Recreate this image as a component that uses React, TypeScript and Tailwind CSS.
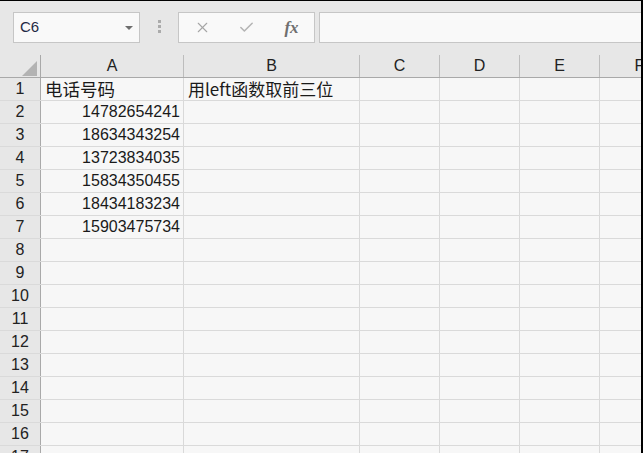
import { Check, X } from "lucide-react";

const cols = [
  { label: "A", w: "w-[143px]" },
  { label: "B", w: "w-[176px]" },
  { label: "C", w: "w-[80px]" },
  { label: "D", w: "w-[80px]" },
  { label: "E", w: "w-[80px]" },
  { label: "F", w: "w-[80px]" },
];

const phones = [
  "14782654241",
  "18634343254",
  "13723834035",
  "15834350455",
  "18434183234",
  "15903475734",
];

const rows = Array.from({ length: 17 }, (_, i) => i + 1);

function Toolbar() {
  return (
    <div className="flex shrink-0 items-start h-[54px] pt-[11px] pl-[13px] bg-[#e7e7e7]">
      <div className="flex shrink-0 items-center justify-between w-[127px] h-[31px] border border-[#c6c6c6] bg-[#f9f9f9] pl-[6px] pr-[6px]">
        <span className="text-[15px] text-[#1f2a44]">C6</span>
        <div className="w-0 h-0 border-l-[4px] border-r-[4px] border-t-[4px] border-l-transparent border-r-transparent border-t-[#6e6e6e]" />
      </div>
      <div className="flex shrink-0 flex-col gap-[2px] w-[38px] items-center pt-[8px]">
        <div className="w-[3px] h-[3px] bg-[#ababab]" />
        <div className="w-[3px] h-[3px] bg-[#ababab]" />
        <div className="w-[3px] h-[3px] bg-[#ababab]" />
      </div>
      <div className="flex shrink-0 items-center w-[137px] h-[31px] border border-[#c6c6c6] bg-[#f9f9f9]">
        <div className="w-[45px] flex justify-center pl-[1px]">
          <X size={17} strokeWidth={1.5} color="#a6a6a6" />
        </div>
        <div className="w-[45px] flex justify-center">
          <Check size={17} strokeWidth={2.2} color="#b4b4b4" />
        </div>
        <div className="w-[45px] flex justify-center">
          <span className="italic font-bold text-[17px] text-[#6f6f6f] [font-family:'Liberation_Serif',serif]">
            fx
          </span>
        </div>
      </div>
      <div className="flex-1 ml-[4px] h-[31px] border-y border-l border-[#c6c6c6] bg-[#f9f9f9]" />
    </div>
  );
}

function HeaderRow() {
  return (
    <div className="flex shrink-0 h-[23px] bg-[#e7e7e7] border-b border-[#a9a9a9]">
      <div className="w-[41px] shrink-0 h-full border-r border-[#a9a9a9] flex items-end justify-end pr-[3px] pb-[1px]">
        <svg width="15" height="15" viewBox="0 0 15 15">
          <polygon points="15,0 15,15 0,15" fill="#b3b3b3" />
        </svg>
      </div>
      {cols.map((c) => (
        <div
          key={c.label}
          className={`${c.w} shrink-0 h-full border-r border-[#bdbdbd] flex items-center justify-center text-[16px] text-[#222]`}
        >
          {c.label}
        </div>
      ))}
    </div>
  );
}

function Cell({ w, children, right }: { w: string; children?: React.ReactNode; right?: boolean }) {
  return (
    <div
      className={`${w} shrink-0 h-full border-r border-[#d9d9d9] flex items-center overflow-visible whitespace-nowrap ${
        right ? "justify-end pr-[3px]" : "pl-[4px]"
      }`}
    >
      {children}
    </div>
  );
}

export default function App() {
  return (
    <div className="w-[643px] h-[453px] overflow-hidden flex bg-[#f7f7f7] [font-family:'Liberation_Sans','Noto_Sans_CJK_SC',sans-serif] text-[#1a1a1a]">
      <div className="flex-1 min-w-0 flex flex-col border-t border-black overflow-hidden">
        <Toolbar />
        <HeaderRow />
        {rows.map((r) => (
          <div key={r} className="flex h-[23px] shrink-0 border-b border-[#dadada]">
            <div className="w-[41px] shrink-0 h-full bg-[#e7e7e7] border-r border-[#a9a9a9] flex items-center justify-center text-[16px] text-[#222]">
              {r}
            </div>
            <Cell w={cols[0].w} right={r > 1}>
              {r === 1 ? (
                <span className="text-[17.5px] [font-family:'Noto_Sans_CJK_SC',sans-serif]">电话号码</span>
              ) : r <= 7 ? (
                <span className="text-[16px]">{phones[r - 2]}</span>
              ) : null}
            </Cell>
            <Cell w={cols[1].w}>
              {r === 1 ? (
                <span className="text-[17px] [font-family:'Noto_Sans_CJK_SC',sans-serif]">用left函数取前三位</span>
              ) : null}
            </Cell>
            <Cell w={cols[2].w} />
            <Cell w={cols[3].w} />
            <Cell w={cols[4].w} />
            <Cell w={cols[5].w} />
          </div>
        ))}
      </div>
      <div className="w-[2px] shrink-0 h-full bg-black" />
    </div>
  );
}
